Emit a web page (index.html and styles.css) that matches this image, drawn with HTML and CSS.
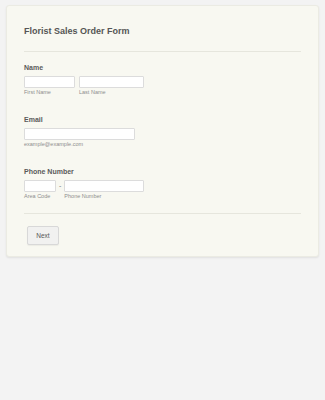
FILE: index.html
```html
<!DOCTYPE html>
<html lang="en">
<head>
    <meta charset="UTF-8">
    <meta name="viewport" content="width=device-width, initial-scale=1.0">
    <title>Florist Sales Order Form</title>
    <link rel="stylesheet" href="styles.css">
</head>
<body>
    <form class="card">
        <h1 class="form-title">Florist Sales Order Form</h1>
        <hr class="divider">

        <div class="field">
            <label class="field-label">Name</label>
            <div class="row">
                <div class="sub">
                    <input type="text" class="input w-first">
                    <span class="sub-label">First Name</span>
                </div>
                <div class="sub">
                    <input type="text" class="input w-last">
                    <span class="sub-label">Last Name</span>
                </div>
            </div>
        </div>

        <div class="field">
            <label class="field-label">Email</label>
            <div class="sub">
                <input type="email" class="input w-email">
                <span class="sub-label">example@example.com</span>
            </div>
        </div>

        <div class="field last">
            <label class="field-label">Phone Number</label>
            <div class="row">
                <div class="sub">
                    <input type="text" class="input w-area">
                    <span class="sub-label">Area Code</span>
                </div>
                <span class="dash">-</span>
                <div class="sub">
                    <input type="text" class="input w-phone">
                    <span class="sub-label">Phone Number</span>
                </div>
            </div>
        </div>

        <hr class="divider bottom">

        <button type="button" class="next-btn">Next</button>
    </form>
</body>
</html>
```

FILE: styles.css
```css
body {
    margin: 0;
    padding: 5px 6px;
    background-color: #f3f3f3;
    font-family: "Liberation Sans", Arial, sans-serif;
    height: 400px;
    box-sizing: border-box;
}

.card {
    display: block;
    background-color: #f8f8f1;
    border: 1px solid #ebebe3;
    border-radius: 3px;
    box-shadow: 0 1px 2px rgba(0, 0, 0, 0.08);
    padding: 20px 17px 11px;
}

.form-title {
    margin: 0;
    font-size: 9px;
    line-height: 11px;
    font-weight: bold;
    color: #555;
}

.divider {
    border: none;
    border-top: 1px solid #e6e6dd;
    margin: 14px 0 11px;
}

.divider.bottom {
    margin: 0 0 12px;
}

.field {
    margin-bottom: 19px;
}

.field.last {
    margin-bottom: 13px;
}

.field-label {
    display: block;
    font-size: 7px;
    line-height: 9px;
    font-weight: bold;
    color: #5a5a5a;
    margin-bottom: 4px;
}

.row {
    display: flex;
    align-items: flex-start;
    gap: 4px;
}

.sub {
    display: flex;
    flex-direction: column;
}

.input {
    box-sizing: border-box;
    height: 12px;
    margin: 0;
    padding: 0;
    background-color: #fff;
    border: 1px solid #dcdcdc;
    border-radius: 1px;
}

.w-first { width: 51px; }
.w-last { width: 65px; }
.w-email { width: 111px; }
.w-area { width: 32px; }
.w-phone { width: 80px; }

.sub-label {
    font-size: 5.5px;
    line-height: 7px;
    color: #8e8e8e;
    margin-top: 1px;
}

.dash {
    font-size: 7px;
    line-height: 12px;
    color: #777;
    margin: 0 -1px;
}

.next-btn {
    display: block;
    margin-left: 3px;
    width: 32px;
    height: 19px;
    padding: 0;
    background-color: #f1f1f0;
    border: 1px solid #d8d8d8;
    border-radius: 2px;
    box-shadow: 0 1px 1px rgba(0, 0, 0, 0.05);
    font-family: "Liberation Sans", Arial, sans-serif;
    font-size: 6.5px;
    color: #555;
}
```
